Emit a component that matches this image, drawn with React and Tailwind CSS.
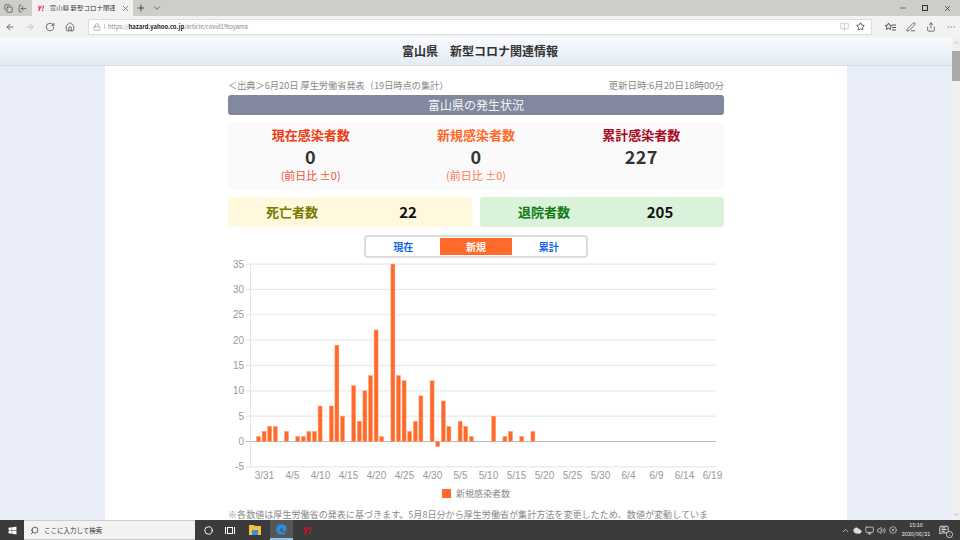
import React from "react";
import {
  ArrowLeft,
  ArrowRight,
  RotateCw,
  Home,
  Lock,
  BookOpen,
  Star,
  PenLine,
  Share,
  MoreHorizontal,
  Plus,
  ChevronDown,
  ChevronUp,
  X,
  Minus,
  Search,
  Circle,
  Cloud,
  Monitor,
  Volume2,
  CircleX,
  MessageSquareText,
  Copy,
  LogIn,
} from "lucide-react";
import { FaEdge, FaWindows } from "react-icons/fa";

const FONT = "[font-family:'Noto_Sans_CJK_JP','Liberation_Sans',sans-serif]";

// one value per day, starting 3/30
const values = [
  1, 2, 3, 3, 0, 2, 0, 1, 1, 2, 2, 7, 0, 7, 19, 5, 0, 11, 4, 10, 13, 22, 1, 0, 35, 13, 12, 2, 4, 9, 0, 12, -1, 8, 3, 0,
  4, 3, 1, 0, 0, 0, 5, 0, 1, 2, 0, 1, 0, 2,
];
const xLabels = ["3/31", "4/5", "4/10", "4/15", "4/20", "4/25", "4/30", "5/5", "5/10", "5/15", "5/20", "5/25", "5/30", "6/4", "6/9", "6/14", "6/19"];
const yLabels = [35, 30, 25, 20, 15, 10, 5, 0, -5];

const Chart = () => {
  const zeroY = 183.5;
  const unit = 5.07;
  return (
    <svg width="496" height="248" className="block">
      {yLabels.map((v) => {
        const y = zeroY - v * unit;
        return (
          <g key={v}>
            <line x1="18" x2="488" y1={y} y2={y} stroke={v === 0 ? "#bdbdbd" : "#e9e9e9"} strokeWidth="1.2" />
            <text x="16" y={y + 3.5} textAnchor="end" fontSize="10" fill="#999" fontFamily="Liberation Sans">
              {v}
            </text>
          </g>
        );
      })}
      <line x1="22.5" x2="22.5" y1="6" y2="208.5" stroke="#e4e4e4" />
      {values.map((v, i) =>
        v === 0 ? null : (
          <rect
            key={i}
            x={28.5 + i * 5.6}
            y={v > 0 ? zeroY - v * unit : zeroY}
            width="4"
            height={Math.abs(v) * unit}
            fill="#ff6a2b"
            stroke="#ffa27a"
            strokeWidth="0.5"
          />
        )
      )}
      {xLabels.map((l, i) => (
        <text key={l} x={36.5 + i * 28} y="221" textAnchor="middle" fontSize="10" fill="#999" fontFamily="Liberation Sans">
          {l}
        </text>
      ))}
      <rect x="214" y="231" width="9" height="9" fill="#ff6a2b" />
      <text x="228" y="239" fontSize="9" fill="#888" fontFamily="Noto Sans CJK JP">
        新規感染者数
      </text>
    </svg>
  );
};

const Stat = ({ title, titleClass, value, diff, diffClass }) => (
  <div className="flex flex-col items-center">
    <div className={`text-[13px] leading-[18px] font-bold ${titleClass}`}>{title}</div>
    <div className="text-[18px] leading-[24px] font-bold tracking-[0.5px] text-[#333]">{value}</div>
    {diff && <div className={`text-[11px] leading-[14px] ${diffClass}`}>{diff}</div>}
  </div>
);

const FavouritesIcon = () => (
  <svg width="11" height="10" viewBox="0 0 11 10" fill="none" stroke="#444" strokeWidth="0.9">
    <path d="M3.5 1l1 2.2 2.4.3-1.8 1.6.5 2.4-2.1-1.2-2.1 1.2.5-2.4L.1 3.5l2.4-.3z" />
    <path d="M7 3h4M7 5.5h4M7 8h4" />
  </svg>
);

const TaskViewIcon = () => (
  <svg width="10" height="9" viewBox="0 0 10 9" fill="none" stroke="#fff" strokeWidth="1">
    <rect x="2.5" y="1.5" width="5" height="6" />
    <path d="M0.5 1v7M9.5 1v7" />
  </svg>
);

const BrowserTop = () => (
  <>
    <div className="h-[16px] bg-[#cfcdc8] flex items-stretch text-[#333] shrink-0">
      <div className="w-[32px] flex items-center gap-[5px] pl-[4px]">
        <Copy size={9} strokeWidth={1.6} />
        <LogIn size={9} strokeWidth={1.6} className="-scale-x-100" />
      </div>
      <div className="w-[101px] bg-[#f2f2f2] flex items-center pl-[5px] pr-[3px] gap-[6px]">
        <span className="text-[7px] leading-none font-bold italic text-[#e60033]">Y!</span>
        <span className="text-[6.5px] leading-none whitespace-nowrap overflow-hidden w-[70px]">富山県 新型コロナ関連情報</span>
        <X size={9} className="text-[#666] shrink-0" />
      </div>
      <div className="flex items-center gap-[6px] pl-[3px]">
        <Plus size={10} />
        <ChevronDown size={10} className="text-[#555]" />
      </div>
      <div className="flex-1 flex items-center justify-end gap-[15px] pr-[8px]">
        <Minus size={8} />
        <span className="w-[6px] h-[6px] border border-[#333]" />
        <X size={9} />
      </div>
    </div>
    <div className="h-[21px] bg-[#f2f2f2] flex items-center shrink-0 text-[#555]">
      <div className="w-[88px] flex items-center gap-[10px] pl-[5px]">
        <ArrowLeft size={10} />
        <ArrowRight size={10} className="text-[#bbb]" />
        <RotateCw size={10} />
        <Home size={10} />
      </div>
      <div className="w-[784px] h-[16px] bg-white border border-[#ddd] flex items-center pl-[4px] pr-[6px] gap-[3px]">
        <Lock size={8} className="text-[#999]" />
        <span className="text-[5.9px] leading-none text-[#888] border-l border-[#ccc] pl-[3px]">
          https://<span className="text-[#222] font-bold">hazard.yahoo.co.jp</span>/article/covid19toyama
        </span>
        <span className="flex-1" />
        <BookOpen size={9} className="text-[#bbb] mr-[4px]" />
        <Star size={9} className="text-[#333]" />
      </div>
      <div className="flex-1 flex items-center gap-[10px] pl-[13px]">
        <FavouritesIcon />
        <PenLine size={10} />
        <Share size={10} />
        <MoreHorizontal size={10} className="text-[#aaa]" />
      </div>
    </div>
  </>
);

const Page = () => (
  <div className="flex-1 min-w-0 flex flex-col bg-[#e9edf8]">
    <div className="h-[29px] shrink-0 pl-[8px] bg-gradient-to-b from-[#f8fbfd] to-[#e4ebf4] border-b border-[#d5dde6] flex items-center justify-center text-[12px] font-bold text-[#333]">
      富山県　新型コロナ関連情報
    </div>
    <div className="w-[742px] flex-1 mx-auto bg-white overflow-hidden">
      <div className="w-[496px] mx-auto pt-[12px]">
        <div className="flex justify-between items-center text-[9.5px] leading-[14px] text-[#888]">
          <span className="text-[9.2px]">＜出典＞6月20日 厚生労働省発表（19日時点の集計）</span>
          <span>更新日時:6月20日18時00分</span>
        </div>
        <div className="mt-[3px] h-[20px] bg-[#82889e] rounded-[3px] flex items-center justify-center text-[12px] text-[#f4f4f4]">
          富山県の発生状況
        </div>
        <div className="mt-[7px] h-[68px] bg-[#fafafa] rounded-[3px] grid grid-cols-3 pt-[4px]">
          <Stat title="現在感染者数" titleClass="text-[#f03c14]" value="0" diff="(前日比 ±0)" diffClass="text-[#f0522d]" />
          <Stat title="新規感染者数" titleClass="text-[#ff6a2b]" value="0" diff="(前日比 ±0)" diffClass="text-[#ff7a50]" />
          <Stat title="累計感染者数" titleClass="text-[#a80b1e]" value="227" />
        </div>
        <div className="mt-[7px] grid grid-cols-2 gap-[8px]">
          <div className="h-[30px] bg-[#fff8dd] rounded-[3px] grid grid-cols-2 items-center">
            <span className="text-center text-[13px] font-bold text-[#7b7a00] pl-[6px]">死亡者数</span>
            <span className="text-center text-[15px] font-bold text-[#111] pr-[6px]">22</span>
          </div>
          <div className="h-[30px] bg-[#d9f2d9] rounded-[3px] grid grid-cols-2 items-center">
            <span className="text-center text-[13px] font-bold text-[#127a12] pl-[6px]">退院者数</span>
            <span className="text-center text-[15px] font-bold text-[#111] pr-[6px]">205</span>
          </div>
        </div>
        <div className="mt-[8px] mx-auto w-[224px] h-[23px] bg-white border-2 border-[#ddd] rounded-[4px] grid grid-cols-3 items-center p-[1px] text-[10px] font-bold text-center text-[#1464e6]">
          <span>現在</span>
          <span className="h-[17px] flex items-center justify-center bg-[#ff6a2b] text-white">新規</span>
          <span>累計</span>
        </div>
        <Chart />
        <p className="text-[9.07px] leading-[16px] text-[#888]">
          ※各数値は厚生労働省の発表に基づきます。5月8日分から厚生労働省が集計方法を変更したため、数値が変動しています。
        </p>
      </div>
    </div>
  </div>
);

const Scrollbar = () => (
  <div className="w-[8px] shrink-0 bg-[#f0f0f0] flex flex-col items-center text-[#999]">
    <ChevronUp size={7} className="mt-[2px]" />
    <div className="w-full h-[30px] mt-[5px] bg-[#a9a9a9]" />
    <div className="flex-1" />
    <ChevronDown size={7} className="mb-[2px]" />
  </div>
);

const Taskbar = () => (
  <div className="h-[20px] shrink-0 bg-[#3b3b3b] flex items-center text-white">
    <div className="w-[24px] flex justify-center">
      <FaWindows size={9} />
    </div>
    <div className="w-[171px] h-full bg-[#f2f2f2] flex items-center pl-[6px] gap-[5px] text-[#333] border-y border-[#ccc]">
      <Search size={9} className="-scale-x-100" />
      <span className="text-[6.5px] leading-none">ここに入力して検索</span>
    </div>
    <div className="w-[26px] flex justify-center">
      <Circle size={9} strokeWidth={2.5} />
    </div>
    <div className="w-[18px] flex justify-center">
      <TaskViewIcon />
    </div>
    <div className="w-[31px] flex justify-center">
      <svg width="12" height="10" viewBox="0 0 12 10">
        <path d="M0 0h5l1 1h6v9H0z" fill="#f4c23c" />
        <path d="M3 5h6v5H3z" fill="#3f8fd8" />
      </svg>
    </div>
    <div className="w-[23px] h-full bg-[#565656] border-b-2 border-[#8cc4ee] flex items-center justify-center">
      <FaEdge size={11} className="text-[#2b8fe0]" />
    </div>
    <div className="w-[26px] text-center text-[9px] leading-none font-bold italic text-[#e60033]">Y!</div>
    <div className="flex-1" />
    <div className="flex items-center gap-[3px] text-[#ddd]">
      <ChevronUp size={9} />
      <Cloud size={9} fill="#ddd" />
      <Monitor size={9} />
      <Volume2 size={9} />
      <CircleX size={8} />
    </div>
    <div className="w-[34px] ml-[2px] text-center text-[5.5px] leading-[9px] text-[#eee]">
      <div>15:10</div>
      <div>2020/06/21</div>
    </div>
    <div className="w-[27px] flex justify-center pr-[5px]">
      <div className="relative">
        <MessageSquareText size={10} />
        <span className="absolute -right-[4px] -bottom-[3px] w-[7px] h-[7px] rounded-full bg-[#222] border border-[#ddd] text-[4px] leading-[5px] text-center">
          1
        </span>
      </div>
    </div>
  </div>
);

export default function App() {
  return (
    <div className={`w-[960px] h-[540px] overflow-hidden flex flex-col bg-white ${FONT}`}>
      <BrowserTop />
      <div className="flex-1 min-h-0 flex overflow-hidden">
        <Page />
        <Scrollbar />
      </div>
      <Taskbar />
    </div>
  );
}
